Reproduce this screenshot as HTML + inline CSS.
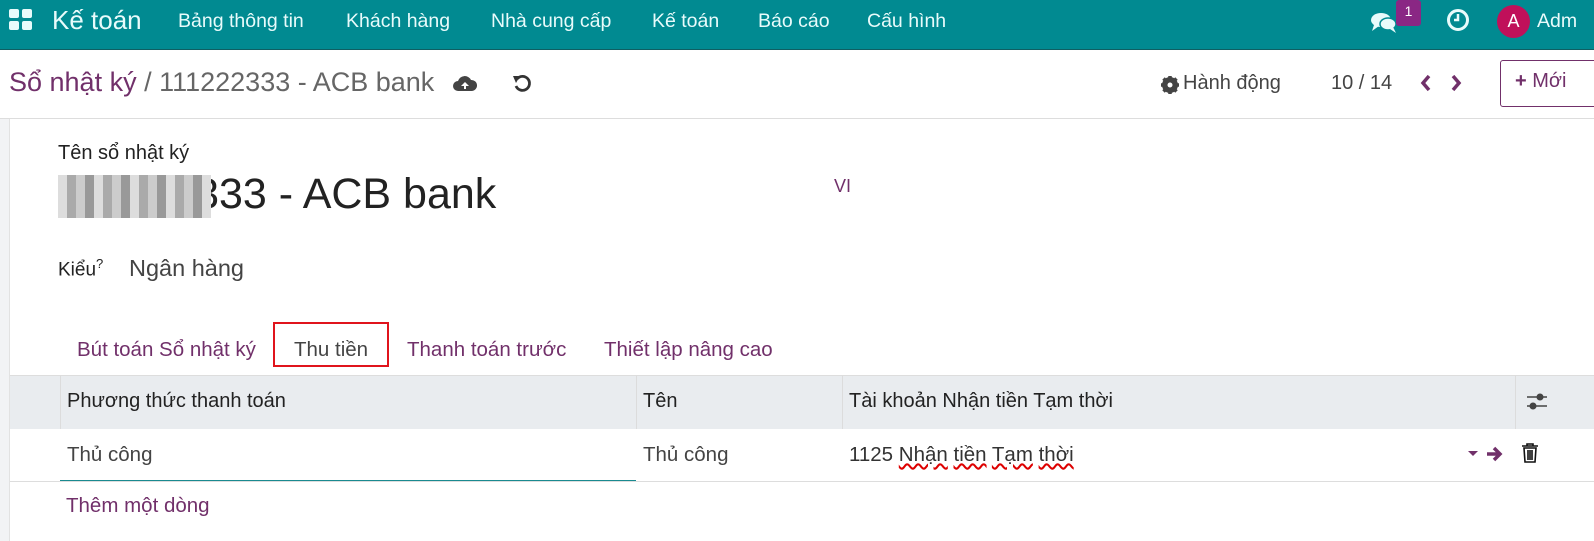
<!DOCTYPE html>
<html><head><meta charset="utf-8"><style>
*{box-sizing:border-box;margin:0;padding:0}
body{width:1594px;height:541px;overflow:hidden;background:#fff;font-family:"Liberation Sans",sans-serif;position:relative;color:#222}
.nav{position:absolute;left:0;top:0;width:1594px;height:50px;background:#018a91;border-bottom:1px solid #0f5f63;color:#fff}
.nav span{position:absolute;top:10px;font-size:19.5px;color:#e8fbfb}
.cp{position:absolute;top:50px;left:0;width:1594px;height:69px;border-bottom:1px solid #ddd;background:#fff}
.abs{position:absolute;white-space:nowrap}
.side{position:absolute;left:0;top:119px;width:10px;height:422px;background:#f2f3f5;border-right:1px solid #e2e2e2}
.pur{color:#71306a}
</style></head><body>
<div class="nav">
 <svg class="abs" style="left:9px;top:9px" width="24" height="22"><rect x="0" y="0" width="10" height="9" rx="2" fill="#e8fbfb"/><rect x="13" y="0" width="10" height="9" rx="2" fill="#e8fbfb"/><rect x="0" y="12" width="10" height="9" rx="2" fill="#e8fbfb"/><rect x="13" y="12" width="10" height="9" rx="2" fill="#e8fbfb"/></svg>
 <span style="left:52px;top:5px;font-size:26px">Kế toán</span>
 <span style="left:178px">Bảng thông tin</span>
 <span style="left:346px">Khách hàng</span>
 <span style="left:491px">Nhà cung cấp</span>
 <span style="left:652px">Kế toán</span>
 <span style="left:758px">Báo cáo</span>
 <span style="left:867px">Cấu hình</span>
 <svg class="abs" style="left:1370px;top:10px" width="28" height="24"><ellipse cx="11" cy="10" rx="10" ry="7" fill="#e8fbfb"/><path d="M4 15 L2 21 L9 16Z" fill="#e8fbfb"/><ellipse cx="18" cy="14" rx="8" ry="6" fill="#e8fbfb" stroke="#018a91" stroke-width="1.5"/><path d="M20 19 L26 23 L23 17Z" fill="#e8fbfb"/></svg>
 <div class="abs" style="left:1396px;top:0;width:25px;height:26px;background:#8a2784;border-radius:3px;color:#fff;font-size:14px;text-align:center;line-height:22px">1</div>
 <svg class="abs" style="left:1446px;top:8px" width="24" height="24"><circle cx="12" cy="12" r="9.5" fill="none" stroke="#e8fbfb" stroke-width="3"/><path d="M12 6 V12 H8" fill="none" stroke="#e8fbfb" stroke-width="2.5"/></svg>
 <div class="abs" style="left:1497px;top:5px;width:33px;height:33px;border-radius:50%;background:#c0105a;color:#fff;font-size:18px;text-align:center;line-height:33px">A</div>
 <span style="left:1537px">Adm</span>
</div>
<div class="cp">
 <div class="abs" style="left:9px;top:17px;font-size:27px"><span class="pur">Sổ nhật ký</span><span style="color:#666"> / 111222333 - ACB bank</span></div>
 <svg class="abs" style="left:453px;top:24px" width="24" height="18"><path d="M5 17 A5 5 0 0 1 5 7 A7 7 0 0 1 18 6 A5.5 5.5 0 0 1 19 17Z" fill="#444"/><path d="M12 8 L8 12 H11 V15 H13 V12 H16Z" fill="#fff"/></svg>
 <svg class="abs" style="left:512px;top:23px" width="20" height="20"><path d="M5 6 A7 7 0 1 1 4 13" fill="none" stroke="#333" stroke-width="2.8"/><path d="M1 3 L8 3 L4 10Z" fill="#333"/></svg>
 <svg class="abs" style="left:1160px;top:25px" width="20" height="20"><circle cx="10" cy="10" r="6" fill="none" stroke="#444" stroke-width="4"/><g stroke="#444" stroke-width="3.5"><path d="M10 1V19M1 10H19M3.5 3.5L16.5 16.5M16.5 3.5L3.5 16.5"/></g><circle cx="10" cy="10" r="2.5" fill="#fff"/></svg>
 <div class="abs" style="left:1183px;top:22px;font-size:20px;color:#444">Hành động</div>
 <div class="abs" style="left:1331px;top:22px;font-size:20px;color:#444">10 / 14</div>
 <svg class="abs" style="left:1418px;top:23px" width="50" height="20"><path d="M11 3 L5 10 L11 17" fill="none" stroke="#71306a" stroke-width="3.5"/><path d="M35 3 L41 10 L35 17" fill="none" stroke="#71306a" stroke-width="3.5"/></svg>
 <div class="abs" style="left:1500px;top:10px;width:120px;height:47px;border:1px solid #71306a;border-radius:3px"></div>
 <div class="abs pur" style="left:1515px;top:20px;font-size:20px"><b>+</b> Mới</div>
</div>
<div class="side"></div>
<div class="abs" style="left:58px;top:142px;font-size:20px;color:#222">Tên sổ nhật ký</div>
<div class="abs" style="left:58px;top:170px;font-size:43px;color:#222">111222333 - ACB bank</div>
<div class="abs" style="left:58px;top:175px;width:153px;height:43px;background:repeating-linear-gradient(90deg,#ddd 0 9px,#aaa 9px 18px,#ccc 18px 27px,#999 27px 36px)"></div>
<div class="abs pur" style="left:834px;top:176px;font-size:18px">VI</div>
<div class="abs" style="left:58px;top:256px;font-size:19px">Kiểu<sup style="font-size:13px">?</sup></div>
<div class="abs" style="left:129px;top:255px;font-size:23.5px;color:#444">Ngân hàng</div>
<div class="abs pur" style="left:77px;top:338px;font-size:20.5px">Bút toán Sổ nhật ký</div>
<div class="abs" style="left:294px;top:338px;font-size:20.5px;color:#444">Thu tiền</div>
<div class="abs pur" style="left:407px;top:338px;font-size:20.5px">Thanh toán trước</div>
<div class="abs pur" style="left:604px;top:338px;font-size:20.5px">Thiết lập nâng cao</div>
<div class="abs" style="left:273px;top:322px;width:116px;height:45px;border:2.5px solid #e0141c"></div>
<div class="abs" style="left:10px;top:375px;width:1584px;height:54px;background:#e9ecef;border-top:1px solid #ddd"></div>
<div class="abs" style="left:60px;top:375px;width:1px;height:54px;background:#dcdcdc"></div>
<div class="abs" style="left:636px;top:375px;width:1px;height:54px;background:#dcdcdc"></div>
<div class="abs" style="left:842px;top:375px;width:1px;height:54px;background:#dcdcdc"></div>
<div class="abs" style="left:1515px;top:375px;width:1px;height:54px;background:#dcdcdc"></div>
<div class="abs" style="left:67px;top:390px;font-size:20px">Phương thức thanh toán</div>
<div class="abs" style="left:643px;top:390px;font-size:20px">Tên</div>
<div class="abs" style="left:849px;top:390px;font-size:20px">Tài khoản Nhận tiền Tạm thời</div>
<svg class="abs" style="left:1525px;top:390px" width="24" height="24"><path d="M2 7H22M2 16H22" stroke="#444" stroke-width="1.5"/><circle cx="15" cy="7" r="3.5" fill="#444"/><circle cx="8" cy="16" r="3.5" fill="#444"/></svg>
<div class="abs" style="left:10px;top:481px;width:1584px;height:1px;background:#ddd"></div>
<div class="abs" style="left:60px;top:480px;width:576px;height:1px;background:#1a8a90"></div>
<div class="abs" style="left:67px;top:443px;font-size:20.5px;color:#444">Thủ công</div>
<div class="abs" style="left:643px;top:443px;font-size:20.5px;color:#444">Thủ công</div>
<div class="abs" style="left:849px;top:443px;font-size:20.5px;color:#333">1125 <span style="text-decoration:underline wavy #d00">Nhận</span> <span style="text-decoration:underline wavy #d00">tiền</span> <span style="text-decoration:underline wavy #d00">Tạm</span> <span style="text-decoration:underline wavy #d00">thời</span></div>
<svg class="abs" style="left:1466px;top:444px" width="60" height="22"><path d="M2 7 H12 L7 12Z" fill="#71306a"/><path d="M21 10 H33 M28 4 L34 10 L28 16" fill="none" stroke="#71306a" stroke-width="3.5"/></svg>
<svg class="abs" style="left:1520px;top:442px" width="20" height="22"><path d="M2 4H18M7 4V2H13V4M4 6H16L15 20H5Z M8 8V18 M10 8V18 M12 8V18" fill="none" stroke="#111" stroke-width="1.6"/></svg>
<div class="abs pur" style="left:66px;top:494px;font-size:20.5px">Thêm một dòng</div>
</body></html>
